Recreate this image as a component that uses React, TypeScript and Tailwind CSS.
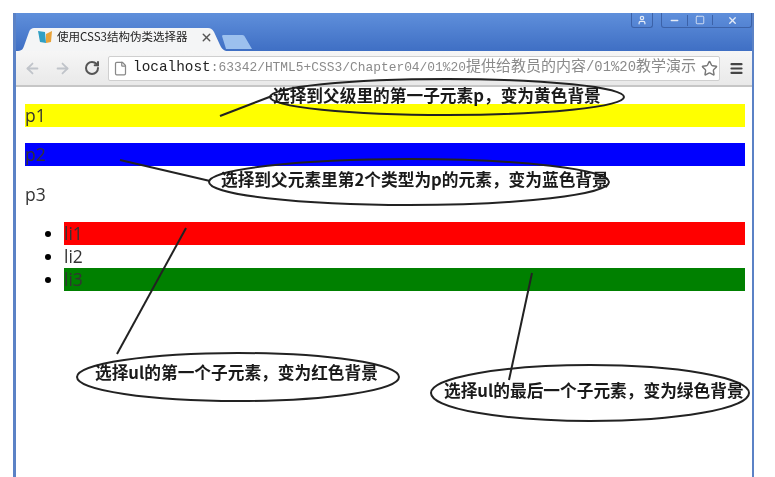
import React from 'react';
import { ArrowLeft, ArrowRight, RotateCw, File, Star, Menu, X, Minus, Square, User } from 'lucide-react';

const cjk = 'font-["Noto_Sans_CJK_SC",sans-serif]';

const notes = [
  { text: '选择到父级里的第一子元素p，变为黄色背景', x: 273, y: 83 },
  { text: '选择到父元素里第2个类型为p的元素，变为蓝色背景', x: 221, y: 167 },
  { text: '选择ul的第一个子元素，变为红色背景', x: 95, y: 360 },
  { text: '选择ul的最后一个子元素，变为绿色背景', x: 444, y: 378 },
];

// hand-drawn callouts that lie over the page
const Callouts = () => (
  <>
    <svg className="absolute left-0 top-0" width="775" height="477" fill="none" stroke="#222" strokeWidth="2">
      <ellipse cx="447" cy="97" rx="177" ry="18" />
      <ellipse cx="409" cy="182" rx="200" ry="23" />
      <ellipse cx="238" cy="377" rx="161" ry="24" />
      <ellipse cx="590" cy="393" rx="159" ry="28" />
      <path d="M220 116L272 96" />
      <path d="M120 160L210 181" />
      <path d="M186 228L117 354" />
      <path d="M532 273L509 380" />
    </svg>
    {notes.map((n) => (
      <span
        key={n.text}
        className={`absolute whitespace-nowrap text-[16.7px] leading-6 font-bold text-[#1a1a1a] ${cjk}`}
        style={{ left: n.x, top: n.y }}
      >
        {n.text}
      </span>
    ))}
  </>
);

const Favicon = () => (
  <svg width="16" height="16" viewBox="0 0 16 16">
    <path d="M1 2L8 3L9 14L3 13Z" fill="#2f9fc4" />
    <path d="M9 5L15 2L14 13L9 14Z" fill="#e8a33a" />
  </svg>
);

export default function App() {
  return (
    <div className="relative h-[477px] w-[775px] overflow-hidden bg-white pl-[13px] pr-[21px] pt-[13px] blur-[0.4px]">
      <div className="flex h-full flex-col border-l-[3px] border-r-2 border-[#5b82c6] bg-white">
        {/* Title bar */}
        <div className="relative h-[38px] shrink-0 bg-gradient-to-b from-[#5f8fdb] to-[#3f6fc4]">
          <svg className="absolute bottom-0 left-0" width="240" height="24" viewBox="0 0 240 24">
            <path d="M0 24C6 24 7 22 8 19L13 5C14 2 16 1 18 1H192C195 1 196 2 198 5L204 18C206 22 208 24 212 24Z" fill="#f4f5f6" />
            <path d="M206 9C206 8 207 8 208 8H225C227 8 228 8 229 10L236 22H210Z" fill="#9cc0ee" />
          </svg>
          <div className="absolute left-[21px] top-[12px] flex h-6 items-center gap-[4px]">
            <Favicon />
            <span className={`text-[11.5px] text-[#222] ${cjk}`}>使用CSS3结构伪类选择器</span>
            <X size={13} strokeWidth={2.5} className="ml-[9px] text-[#555]" />
          </div>
          <div className="absolute right-0 top-0 flex items-start gap-[8px]">
            <div className="flex h-[15px] w-[22px] items-center justify-center rounded-b-[3px] border border-t-0 border-[#3c62a8]">
              <User size={10} strokeWidth={3} className="text-[#e4ebf6]" />
            </div>
            <div className="flex h-[15px] items-center rounded-b-[3px] border border-t-0 border-[#3c62a8] text-[#e4ebf6]">
              <div className="flex w-[26px] justify-center border-r border-[#3c62a8]">
                <Minus size={11} strokeWidth={3} />
              </div>
              <div className="flex w-[25px] justify-center border-r border-[#3c62a8]">
                <Square size={10} strokeWidth={2} />
              </div>
              <div className="flex w-[38px] justify-center">
                <X size={11} strokeWidth={3} />
              </div>
            </div>
          </div>
        </div>

        {/* Toolbar */}
        <div className="flex h-[36px] shrink-0 items-center rounded-tr-[3px] border-b-2 border-[#c6c6c6] bg-gradient-to-b from-[#f6f6f6] to-[#e9e9e9] pl-[8px] pr-[8px]">
          <ArrowLeft size={17} strokeWidth={2.5} className="text-[#c0c4ca]" />
          <ArrowRight size={17} strokeWidth={2.5} className="ml-[13px] text-[#c0c4ca]" />
          <RotateCw size={16} strokeWidth={3} className="ml-[13px] text-[#555]" />
          <div className="ml-[8px] flex h-[25px] min-w-0 flex-1 items-center overflow-hidden rounded-[2px] border border-[#cfcfcf] bg-white pl-[4px]">
            <File size={15} className="shrink-0 text-[#888]" />
            <span className={`ml-[5px] min-w-0 flex-1 whitespace-nowrap text-[15px] text-[#8a8a8a] font-["Liberation_Mono","Noto_Sans_CJK_SC",monospace]`}>
              <span className="text-[14.4px] text-[#222]">localhost</span>
              <span className="text-[12.9px]">:63342/HTML5+CSS3/Chapter04/01%20</span>提供给教员的内容<span className="text-[13.9px]">/01%20</span>教学演示
            </span>
            <Star size={17} className="mr-[1px] shrink-0 text-[#777]" />
          </div>
          <Menu size={15} strokeWidth={3.5} className="ml-[9px] text-[#444]" />
        </div>

        {/* Page */}
        <div className={`flex-1 pl-[9px] pr-[7px] pt-[17px] text-[17.5px] leading-[23px] text-[#333] font-["Open_Sans",sans-serif]`}>
          <p className="bg-[#ffff00]">p1</p>
          <p className="mt-4 bg-[#0000ff]">p2</p>
          <p className="mt-[17px]">p3</p>
          <ul className="mt-4 list-disc pl-[39px] marker:text-black">
            <li className="bg-[#ff0000]">li1</li>
            <li>li2</li>
            <li className="bg-[#008000]">li3</li>
          </ul>
        </div>
      </div>
      <Callouts />
    </div>
  );
}
